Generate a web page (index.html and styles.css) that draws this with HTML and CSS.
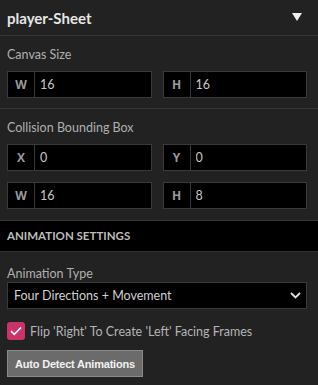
FILE: index.html
```html
<!DOCTYPE html>
<html lang="en">
<head>
    <meta charset="UTF-8">
    <meta name="viewport" content="width=device-width, initial-scale=1.0">
    <title>player-Sheet</title>
    <link rel="stylesheet" href="styles.css">
</head>
<body>
    <div class="panel">
        <div class="panel-header">
            <h2>player-Sheet</h2>
            <span class="toggle"></span>
        </div>

        <div class="section first">
            <div class="label">Canvas Size</div>
            <div class="row">
                <div class="field"><span class="prefix">W</span><input type="text" value="16"></div>
                <div class="field"><span class="prefix">H</span><input type="text" value="16"></div>
            </div>
        </div>

        <div class="section">
            <div class="label">Collision Bounding Box</div>
            <div class="row">
                <div class="field"><span class="prefix">X</span><input type="text" value="0"></div>
                <div class="field"><span class="prefix">Y</span><input type="text" value="0"></div>
            </div>
            <div class="row">
                <div class="field"><span class="prefix">W</span><input type="text" value="16"></div>
                <div class="field"><span class="prefix">H</span><input type="text" value="8"></div>
            </div>
        </div>

        <div class="group-title">ANIMATION SETTINGS</div>

        <div class="section last">
            <div class="label tight">Animation Type</div>
            <div class="select">
                <span>Four Directions + Movement</span>
                <svg width="11" height="7" viewBox="0 0 11 7"><path d="M1 1 L5.5 5.5 L10 1" fill="none" stroke="#e0e0e0" stroke-width="1.8"/></svg>
            </div>
            <label class="check">
                <span class="box">
                    <svg width="12" height="10" viewBox="0 0 12 10"><path d="M1 5.2 L4.3 8.3 L11 1.5" fill="none" stroke="#fff" stroke-width="1.6"/></svg>
                </span>
                Flip 'Right' To Create 'Left' Facing Frames
            </label>
            <button>Auto Detect Animations</button>
        </div>
    </div>
</body>
</html>
```

FILE: styles.css
```css
body {
    margin: 0;
    background: #222222;
    font-family: Lato, "Open Sans", Arial, sans-serif;
    color: #b4b4b4;
}
.panel {
    width: 318px;
}
.panel-header {
    display: flex;
    align-items: center;
    justify-content: space-between;
    height: 36px;
    padding: 0 16px 0 7px;
    border-bottom: 1px solid #363636;
    box-sizing: border-box;
}
.panel-header h2 {
    margin: 0;
    font-size: 15px;
    font-weight: bold;
    color: #e6e6e6;
}
.toggle {
    width: 0;
    height: 0;
    border-left: 5px solid transparent;
    border-right: 5px solid transparent;
    border-top: 8px solid #f0f0f0;
    margin-top: -2px;
}
.section {
    padding: 11px 11px 11px 7px;
    border-bottom: 1px solid #363636;
}
.section.first {
    padding-bottom: 10px;
}
.section.last {
    padding-top: 14px;
    border-bottom: none;
}
.label {
    font-size: 12.5px;
    line-height: 16px;
    color: #b0b0b0;
    margin-bottom: 8px;
}
.label.tight {
    margin-bottom: 0;
}
.row {
    display: flex;
    gap: 11px;
    margin-bottom: 11px;
}
.row:last-child {
    margin-bottom: 0;
}
.field {
    flex: 1;
    min-width: 0;
    display: flex;
    height: 27px;
    background: #000;
    border: 1px solid #3a3a3a;
    box-sizing: border-box;
}
.prefix {
    width: 26px;
    flex: none;
    border-right: 1px solid #3a3a3a;
    display: flex;
    align-items: center;
    justify-content: center;
    font-family: "Open Sans", Arial, sans-serif;
    font-size: 12px;
    font-weight: bold;
    color: #9a9a9a;
}
.field input {
    flex: 1;
    width: 0;
    min-width: 0;
    background: transparent;
    border: none;
    outline: none;
    padding: 0 0 0 5px;
    font-family: inherit;
    font-size: 12.5px;
    color: #c8c8c8;
}
.group-title {
    background: #000;
    height: 30px;
    line-height: 30px;
    padding-left: 7px;
    font-size: 11.5px;
    font-weight: bold;
    color: #bdbdbd;
    border-bottom: 1px solid #333;
}
.select {
    display: flex;
    align-items: center;
    justify-content: space-between;
    height: 27px;
    background: #000;
    border: 1px solid #3a3a3a;
    box-sizing: border-box;
    padding: 0 5px 0 6px;
    font-size: 12.5px;
    color: #d0d0d0;
    margin-bottom: 13px;
}
.check {
    display: flex;
    align-items: center;
    gap: 5px;
    font-size: 12.5px;
    color: #b4b4b4;
    margin-bottom: 10px;
}
.box {
    width: 18px;
    height: 18px;
    border-radius: 3px;
    background: #c9336a;
    display: flex;
    align-items: center;
    justify-content: center;
}
button {
    display: block;
    width: 136px;
    height: 27px;
    background: #6b6b6b;
    border: 1px solid #8a8a8a;
    color: #f2f2f2;
    font-family: "Liberation Sans", Arial, sans-serif;
    font-size: 11px;
    font-weight: bold;
    letter-spacing: -0.2px;
    padding: 0;
    cursor: pointer;
}
```
